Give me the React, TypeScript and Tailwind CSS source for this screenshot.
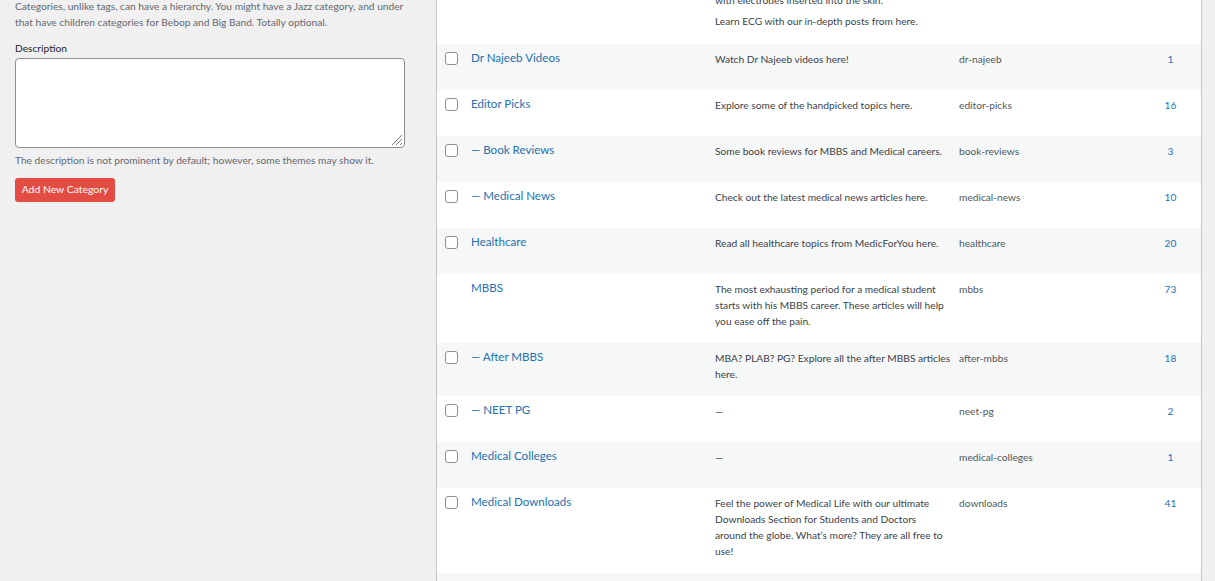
import React from "react";

type Category = {
  name: string;
  depth: number;
  description: string[];
  slug: string;
  count: number;
  checkbox?: boolean;
};

// Description text is kept as its displayed lines.
const categories: Category[] = [
  { name: "Dr Najeeb Videos", depth: 0, description: ["Watch Dr Najeeb videos here!"], slug: "dr-najeeb", count: 1 },
  { name: "Editor Picks", depth: 0, description: ["Explore some of the handpicked topics here."], slug: "editor-picks", count: 16 },
  { name: "Book Reviews", depth: 1, description: ["Some book reviews for MBBS and Medical careers."], slug: "book-reviews", count: 3 },
  { name: "Medical News", depth: 1, description: ["Check out the latest medical news articles here."], slug: "medical-news", count: 10 },
  { name: "Healthcare", depth: 0, description: ["Read all healthcare topics from MedicForYou here."], slug: "healthcare", count: 20 },
  {
    name: "MBBS",
    depth: 0,
    description: [
      "The most exhausting period for a medical student",
      "starts with his MBBS career. These articles will help",
      "you ease off the pain.",
    ],
    slug: "mbbs",
    count: 73,
    checkbox: false,
  },
  {
    name: "After MBBS",
    depth: 1,
    description: ["MBA? PLAB? PG? Explore all the after MBBS articles", "here."],
    slug: "after-mbbs",
    count: 18,
  },
  { name: "NEET PG", depth: 1, description: ["—"], slug: "neet-pg", count: 2 },
  { name: "Medical Colleges", depth: 0, description: ["—"], slug: "medical-colleges", count: 1 },
  {
    name: "Medical Downloads",
    depth: 0,
    description: [
      "Feel the power of Medical Life with our ultimate",
      "Downloads Section for Students and Doctors",
      "around the globe. What’s more? They are all free to",
      "use!",
    ],
    slug: "downloads",
    count: 41,
  },
];

const font = { fontFamily: 'Lato, "Noto Sans", sans-serif' };

function Checkbox() {
  return <span className="block h-[13px] w-[13px] rounded-[3px] border border-[#8c8f94] bg-white" />;
}

function Row({ c, striped }: { c: Category; striped: boolean }) {
  return (
    <div
      className={`grid min-h-[46px] grid-cols-[34px_244px_244px_181px_1fr] ${striped ? "bg-[#f6f7f7]" : "bg-white"}`}
    >
      <div className="pl-[8px] pt-[8px]">{c.checkbox !== false && <Checkbox />}</div>
      <div className="pt-[6px] text-[11.6px] leading-[16px] text-[#2271b1]">
        {c.depth > 0 ? "— " : ""}
        {c.name}
      </div>
      <div className="pb-[14px] pt-[7px] text-[10.2px] leading-[16px] text-[#3c434a]">
        {c.description.map((line) => (
          <span key={line} className="block whitespace-nowrap">
            {line}
          </span>
        ))}
      </div>
      <div className="pt-[7px] text-[10.2px] leading-[16px] text-[#50575e]">{c.slug}</div>
      <div className="pt-[7px] text-center text-[10.2px] leading-[16px] text-[#2271b1]">{c.count}</div>
    </div>
  );
}

export default function App() {
  return (
    <div className="flex h-[581px] w-[1215px] overflow-hidden bg-[#f0f0f1]" style={font}>
      {/* add-category form column */}
      <div className="w-[436px] shrink-0 pl-[15px]">
        <div className="w-[390px]">
          <p className="-mt-[2px] text-[10.2px] leading-[16px] text-[#646970]">
            Categories, unlike tags, can have a hierarchy. You might have a Jazz category, and under that have
            children categories for Bebop and Big Band. Totally optional.
          </p>
          <label className="mt-[10px] block text-[10.2px] leading-[16px] text-[#1d2327]">Description</label>
          <div className="relative mt-[2px] h-[90px] w-[390px] rounded-[4px] border border-[#8c8f94] bg-white">
            <svg className="absolute bottom-[1px] right-[1px]" width="14" height="14" viewBox="0 0 14 14">
              <path d="M13 3 L3 13 M13 7 L7 13 M13 11 L11 13" stroke="#7a7a7a" strokeWidth="1" />
            </svg>
          </div>
          <p className="mt-[4px] text-[10.2px] leading-[16px] text-[#646970]">
            The description is not prominent by default; however, some themes may show it.
          </p>
          <button className="mt-[10px] h-[24px] w-[100px] rounded-[3px] bg-[#e24c42] text-[10.4px] text-white">
            Add New Category
          </button>
        </div>
      </div>

      {/* categories list table */}
      <div className="w-[766px] shrink-0 self-start border-x border-[#c3c4c7] bg-white">
        <div className="-mt-[47px] grid min-h-[46px] grid-cols-[34px_244px_244px_181px_1fr] bg-white">
          <div />
          <div />
          <div className="pb-[15px] pt-[7px] text-[10.2px] leading-[16px] text-[#3c434a]">
            <p>of the heart using electrodes placed</p>
            <p>on the skin surface, sometimes</p>
            <p>with electrodes inserted into the skin.</p>
            <p className="mt-[5px]">Learn ECG with our in-depth posts from here.</p>
          </div>
          <div />
          <div />
        </div>
        {categories.map((c, i) => (
          <Row key={c.slug} c={c} striped={i % 2 === 0} />
        ))}
        <div className="h-[46px] bg-[#f6f7f7]" />
      </div>
    </div>
  );
}
